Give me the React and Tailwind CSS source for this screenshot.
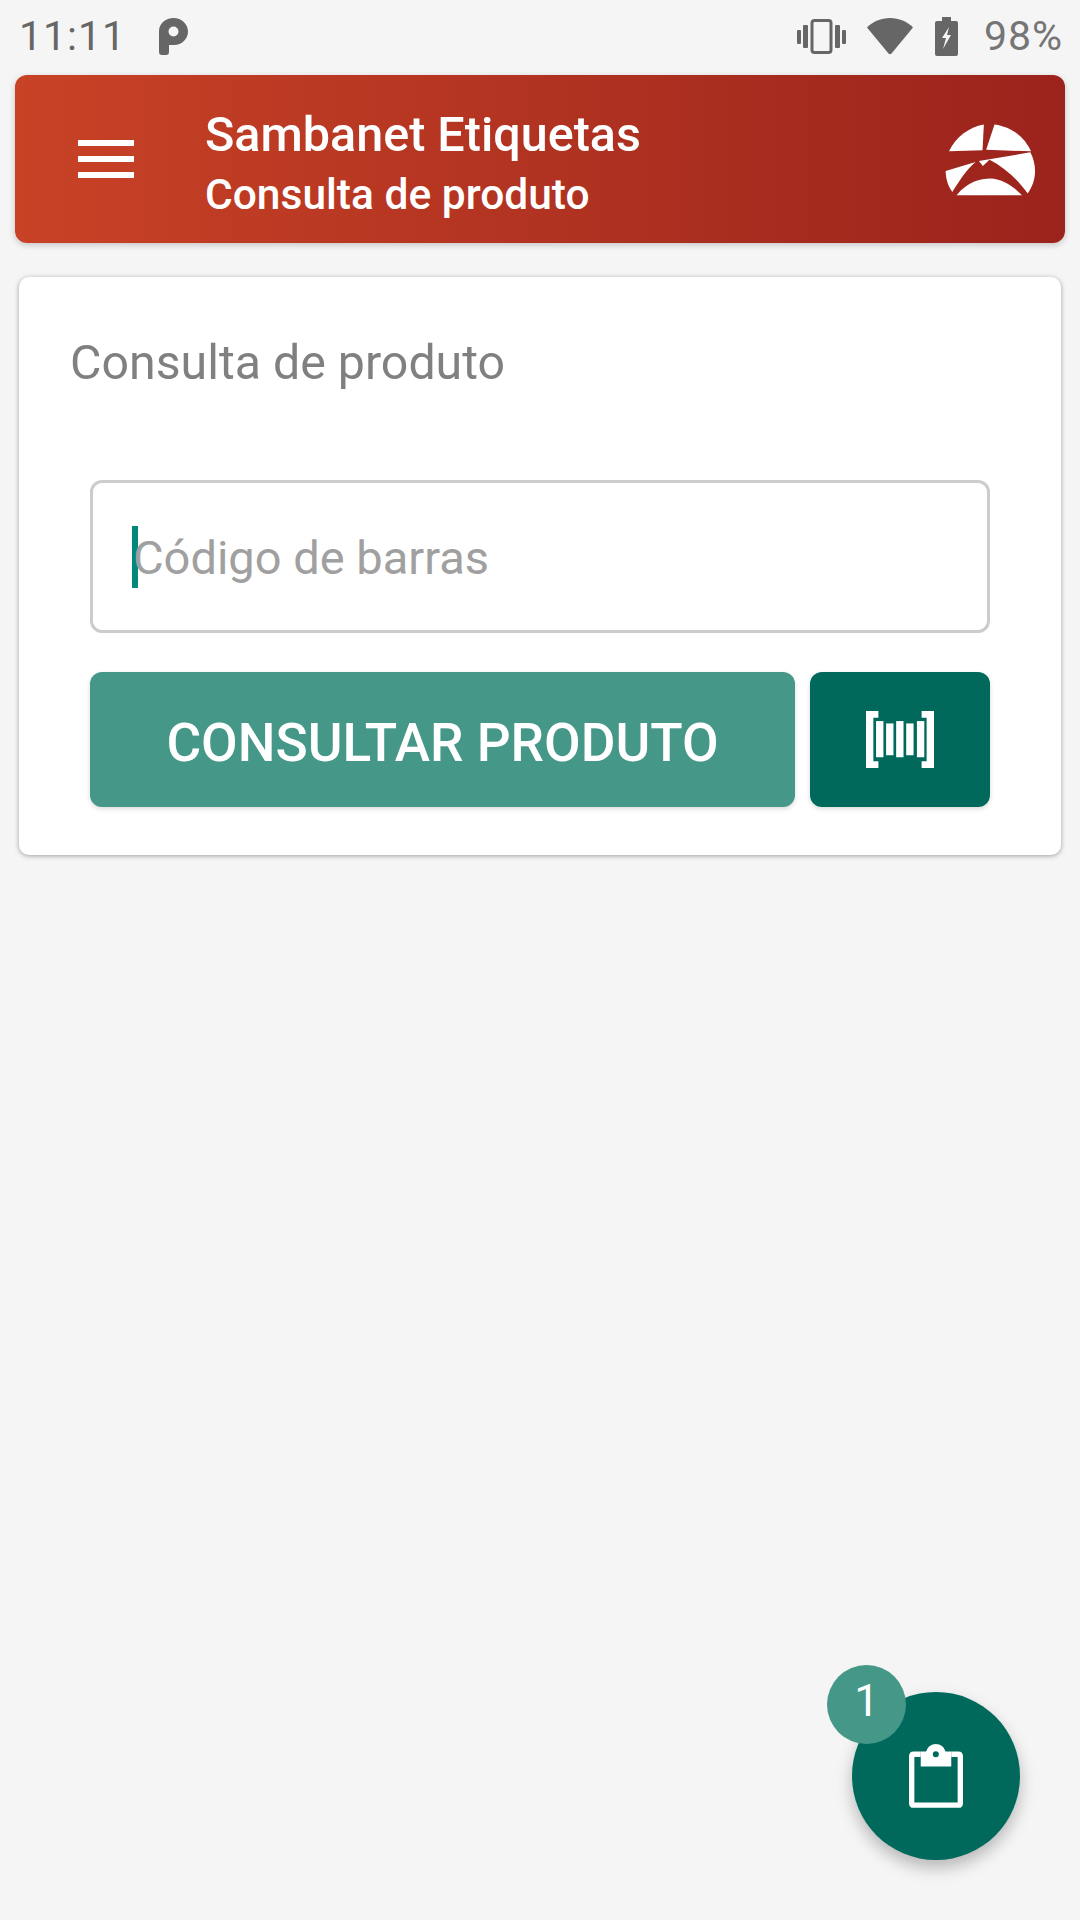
import React from "react";

const VibrateIcon = () => (
  <svg width="49" height="35" viewBox="0 0 49 35" fill="#666">
    <rect x="0" y="11" width="4" height="14" rx="1" />
    <rect x="6" y="6" width="5" height="23" rx="1" />
    <rect x="38" y="6" width="5" height="23" rx="1" />
    <rect x="45" y="11" width="4" height="14" rx="1" />
    <rect x="15" y="1.5" width="19" height="32" rx="2.5" fill="none" stroke="#666" strokeWidth="3" />
  </svg>
);

const WifiIcon = () => (
  <svg width="46" height="37" viewBox="0 0 46 37" fill="#666">
    <path d="M0 9.5C6 3.5 14 0 23 0s17 3.5 23 9.5L24.5 35.5q-1.5 1.5-3 0Z" />
  </svg>
);

const BatteryIcon = () => (
  <svg width="23" height="39" viewBox="0 0 23 39">
    <path
      fill="#666"
      fillRule="evenodd"
      d="M7 0h9v4h5q2 0 2 2v31q0 2-2 2H2q-2 0-2-2V6q0-2 2-2h5ZM14 10 7 21h4l-3 11 8-14h-4Z"
    />
  </svg>
);

const ParkingIcon = () => (
  <svg width="29" height="37" viewBox="0 0 29 37">
    <path
      fill="#666"
      fillRule="evenodd"
      d="M0 13.5C0 5.5 6.5 0 14.5 0S29 6 29 13.5 23 27 15 27h-5v7q0 3-3 3H3q-3 0-3-3ZM14.5 8.5a5 5 0 1 0 0 10 5 5 0 0 0 0-10Z"
    />
  </svg>
);

const LogoIcon = () => (
  <svg width="93" height="75" viewBox="70 35 280 225" fill="#fff">
    <path d="M85 123C105 80 145 50 190 42L186 120Z" />
    <path d="M222 42C280 50 315 85 332 123L197 118Z" />
    <path d="M75 182L165 155C135 180 115 215 95 245C80 225 75 200 75 182Z" />
    <path d="M175 152L330 126C350 165 350 210 322 250C290 205 250 170 207 148L187 167Z" />
    <path d="M108 255C140 215 180 205 210 205C240 205 275 225 305 255Z" />
  </svg>
);

const BarcodeIcon = () => (
  <svg width="68" height="57" viewBox="438 215 203 170" fill="#fff">
    <path d="M438 215h37v20h-15v130h15v20h-37Z" />
    <path d="M641 215h-37v20h15v130h-15v20h37Z" />
    <rect x="468" y="245" width="22" height="108" />
    <rect x="498" y="252" width="22" height="95" />
    <rect x="528" y="245" width="22" height="108" />
    <rect x="558" y="252" width="22" height="95" />
    <rect x="590" y="245" width="22" height="108" />
  </svg>
);

const ClipboardIcon = () => (
  <svg width="54" height="64" viewBox="327 313 161 190">
    <path
      d="M362 343H341q-6 0-6 6V489q0 6 6 6H474q6 0 6-6V349q0-6-6-6H453"
      fill="none"
      stroke="#fff"
      strokeWidth="16"
    />
    <path
      fill="#fff"
      fillRule="evenodd"
      d="M362 335h16a30 30 0 0 1 58 0h17v45h-91ZM407 334a9 9 0 1 0 0 18 9 9 0 0 0 0-18Z"
    />
  </svg>
);

export default function App() {
  return (
    <div className="relative h-[1920px] w-[1080px] overflow-hidden bg-[#f5f5f5] font-['Roboto',sans-serif]">
      <div className="flex h-[75px] items-center pl-[19px] pr-[17px] pb-[2px]">
        <span className="text-[41px] tracking-[1px] text-[#666666]">11:11</span>
        <span className="ml-[33px] flex">
          <ParkingIcon />
        </span>
        <div className="ml-auto flex items-center">
          <VibrateIcon />
          <span className="ml-[21px] flex">
            <WifiIcon />
          </span>
          <span className="ml-[22px] flex">
            <BatteryIcon />
          </span>
          <span className="ml-[26px] text-[41px] tracking-[1px] text-[#757575]">98%</span>
        </div>
      </div>

      <header className="mx-[15px] flex h-[168px] items-center rounded-[12px] bg-linear-to-r from-[#c84226] to-[#9b231c] pl-[63px] pr-[28px] shadow-[0_2px_6px_rgba(0,0,0,0.2)]">
        <div className="flex w-[56px] flex-col gap-[10px]">
          <div className="h-[6px] bg-white" />
          <div className="h-[6px] bg-white" />
          <div className="h-[6px] bg-white" />
        </div>
        <div className="ml-[71px] flex flex-col pt-[12px]">
          <span className="text-[48.5px] leading-[60px] font-medium text-white">Sambanet Etiquetas</span>
          <span className="text-[42.5px] leading-[60px] font-medium text-white">Consulta de produto</span>
        </div>
        <span className="ml-auto flex">
          <LogoIcon />
        </span>
      </header>

      <main className="mx-[19px] mt-[34px] h-[578px] rounded-[10px] bg-white px-[71px] pt-[56px] shadow-[0_1px_5px_rgba(0,0,0,0.35)]">
        <h1 className="-ml-[20px] text-[48.3px] leading-[60px] font-normal text-[#808080]">Consulta de produto</h1>
        <div className="mt-[87px] flex h-[153px] items-center rounded-[12px] border-[3px] border-[#cccccc] pl-[39px]">
          <span className="h-[62px] w-[6px] bg-[#00897b]" />
          <span className="-ml-[5px] pt-[4px] text-[47px] text-[#a0a0a0]">Código de barras</span>
        </div>
        <div className="mt-[39px] flex gap-[15px]">
          <button className="flex h-[135px] w-[705px] items-center justify-center rounded-[12px] bg-[#459787] pt-[9px] text-[53.2px] font-medium text-white shadow-[0_2px_5px_rgba(0,0,0,0.15)]">
            CONSULTAR PRODUTO
          </button>
          <button className="flex h-[135px] w-[180px] items-center justify-center rounded-[12px] bg-[#00695c] shadow-[0_2px_5px_rgba(0,0,0,0.15)]">
            <BarcodeIcon />
          </button>
        </div>
      </main>

      <button className="absolute top-[1692px] left-[852px] flex h-[168px] w-[168px] items-center justify-center rounded-full bg-[#00695c] shadow-[0_8px_16px_rgba(0,0,0,0.25)]">
        <ClipboardIcon />
        <span className="absolute -top-[27px] -left-[25px] flex h-[79px] w-[79px] items-center justify-center rounded-full bg-[#459787] pb-[7px] text-[44px] text-white">
          1
        </span>
      </button>
    </div>
  );
}
